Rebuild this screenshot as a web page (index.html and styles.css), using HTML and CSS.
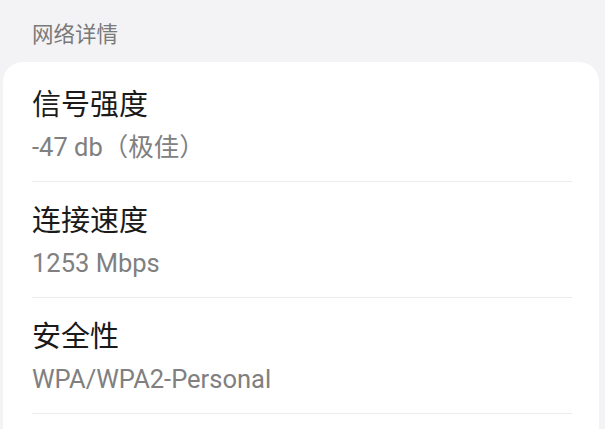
FILE: index.html
```html
<!DOCTYPE html>
<html lang="zh-CN">

<head>
  <meta charset="UTF-8">
  <meta name="viewport" content="width=device-width, initial-scale=1.0">
  <title>网络详情</title>
  <link rel="stylesheet" href="styles.css">
</head>

<body>
  <div class="section-title">网络详情</div>

  <div class="card">
    <div class="item">
      <div class="item-title">信号强度</div>
      <div class="item-value">-47 db（极佳）</div>
    </div>

    <div class="item">
      <div class="item-title">连接速度</div>
      <div class="item-value">1253 Mbps</div>
    </div>

    <div class="item">
      <div class="item-title">安全性</div>
      <div class="item-value">WPA/WPA2-Personal</div>
    </div>
  </div>
</body>

</html>
```

FILE: styles.css
```css
html,
body {
  height: 100%;
}

body {
  margin: 0;
  background-color: #f3f3f5;
  font-family: Roboto, "Noto Sans CJK SC", sans-serif;
  overflow: hidden;
}

.section-title {
  padding: 20px 0 12px 32px;
  font-size: 21.5px;
  line-height: 30px;
  color: #7a7a7a;
}

.card {
  background-color: #ffffff;
  border-radius: 20px;
  margin: 0 6px 0 3px;
  padding: 4px 27px 60px 29px;
}

.item {
  padding: 20px 0 17px;
  border-bottom: 1px solid #ececec;
}

.item-title {
  font-size: 29px;
  line-height: 38px;
  color: #1a1a1a;
}

.item-value {
  margin-top: 6px;
  font-size: 25.5px;
  line-height: 34px;
  color: #808080;
}
```
